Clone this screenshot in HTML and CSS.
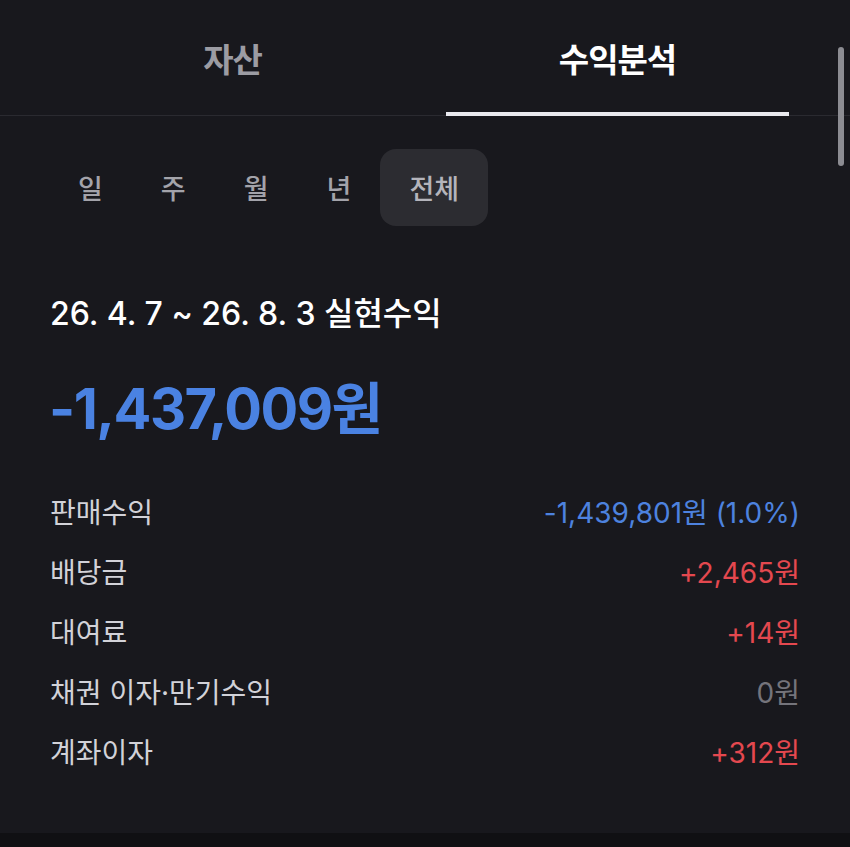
FILE: index.html
```
<!DOCTYPE html>
<html lang="ko">
<head>
    <meta charset="UTF-8">
    <meta name="viewport" content="width=device-width, initial-scale=1.0">
    <title>수익분석</title>
    <link rel="stylesheet" href="styles.css">
</head>
<body>

    <div class="screen">
        <nav class="tabs">
            <a class="tab">자산</a>
            <a class="tab active">수익분석</a>
        </nav>

        <main class="content">
            <div class="periods">
                <button type="button" class="period">일</button>
                <button type="button" class="period">주</button>
                <button type="button" class="period">월</button>
                <button type="button" class="period">년</button>
                <button type="button" class="period selected">전체</button>
            </div>

            <h2 class="range">26. 4. 7 ~ 26. 8. 3 실현수익</h2>
            <p class="total">-1,437,009원</p>

            <ul class="breakdown">
                <li class="row">
                    <span class="label">판매수익</span>
                    <span class="value minus">-1,439,801원 (1.0%)</span>
                </li>
                <li class="row">
                    <span class="label">배당금</span>
                    <span class="value plus">+2,465원</span>
                </li>
                <li class="row">
                    <span class="label">대여료</span>
                    <span class="value plus">+14원</span>
                </li>
                <li class="row">
                    <span class="label">채권 이자·만기수익</span>
                    <span class="value zero">0원</span>
                </li>
                <li class="row">
                    <span class="label">계좌이자</span>
                    <span class="value plus">+312원</span>
                </li>
            </ul>
        </main>

        <div class="bottom-bar"></div>
        <div class="scrollbar"></div>
    </div>

</body>
</html>
```

FILE: styles.css
```
body {
    margin: 0;
    background-color: #18181d;
    font-family: Inter, "Noto Sans CJK KR", sans-serif;
    color: #ffffff;
}

.screen {
    position: relative;
    display: flex;
    flex-direction: column;
    height: 100vh;
}

/* top tabs */
.tabs {
    display: grid;
    grid-template-columns: 1fr 1fr;
    column-gap: 42px;
    height: 116px;
    padding: 0 61px;
    box-shadow: inset 0 -1px 0 #2a2a30;
}

.tab {
    display: block;
    box-sizing: border-box;
    padding-top: 40px;
    line-height: 40px;
    font-size: 33px;
    font-weight: 700;
    letter-spacing: -1px;
    text-align: center;
    color: #9c9ca3;
    border-bottom: 4px solid transparent;
}

    .tab.active {
        color: #ffffff;
        border-bottom-color: #e9e9ee;
    }

.content {
    flex: 1;
    padding: 0 50px 0 49px;
}

/* period filter */
.periods {
    display: flex;
    margin-top: 33px;
}

.period {
    height: 77px;
    padding: 0 29px;
    border: none;
    border-radius: 16px;
    background: none;
    font-family: inherit;
    font-size: 27px;
    font-weight: 500;
    color: #a3a3aa;
}

    .period.selected {
        background-color: #2c2c31;
        color: #b4b4bb;
    }

.range {
    margin: 68px 0 0 1px;
    line-height: 40px;
    font-size: 32px;
    font-weight: 500;
    letter-spacing: 0;
}

.total {
    margin: 43px 0 0 0;
    line-height: 64px;
    font-size: 56px;
    font-weight: 700;
    letter-spacing: -1.5px;
    color: #4a82e2;
}

/* breakdown list */
.breakdown {
    list-style: none;
    margin: 40px 0 0 0;
    padding: 0;
}

.row {
    display: flex;
    justify-content: space-between;
    align-items: center;
    height: 60px;
    font-size: 28px;
}

.label {
    color: #d2d2d8;
    padding-left: 1px;
}

.value.minus {
    color: #4d82df;
}

.value.plus {
    color: #e4484f;
}

.value.zero {
    color: #74747b;
}

.bottom-bar {
    height: 14px;
    background-color: #101013;
}

.scrollbar {
    position: absolute;
    top: 47px;
    right: 6px;
    width: 6px;
    height: 119px;
    border-radius: 3px;
    background-color: #8c8c92;
}
```
